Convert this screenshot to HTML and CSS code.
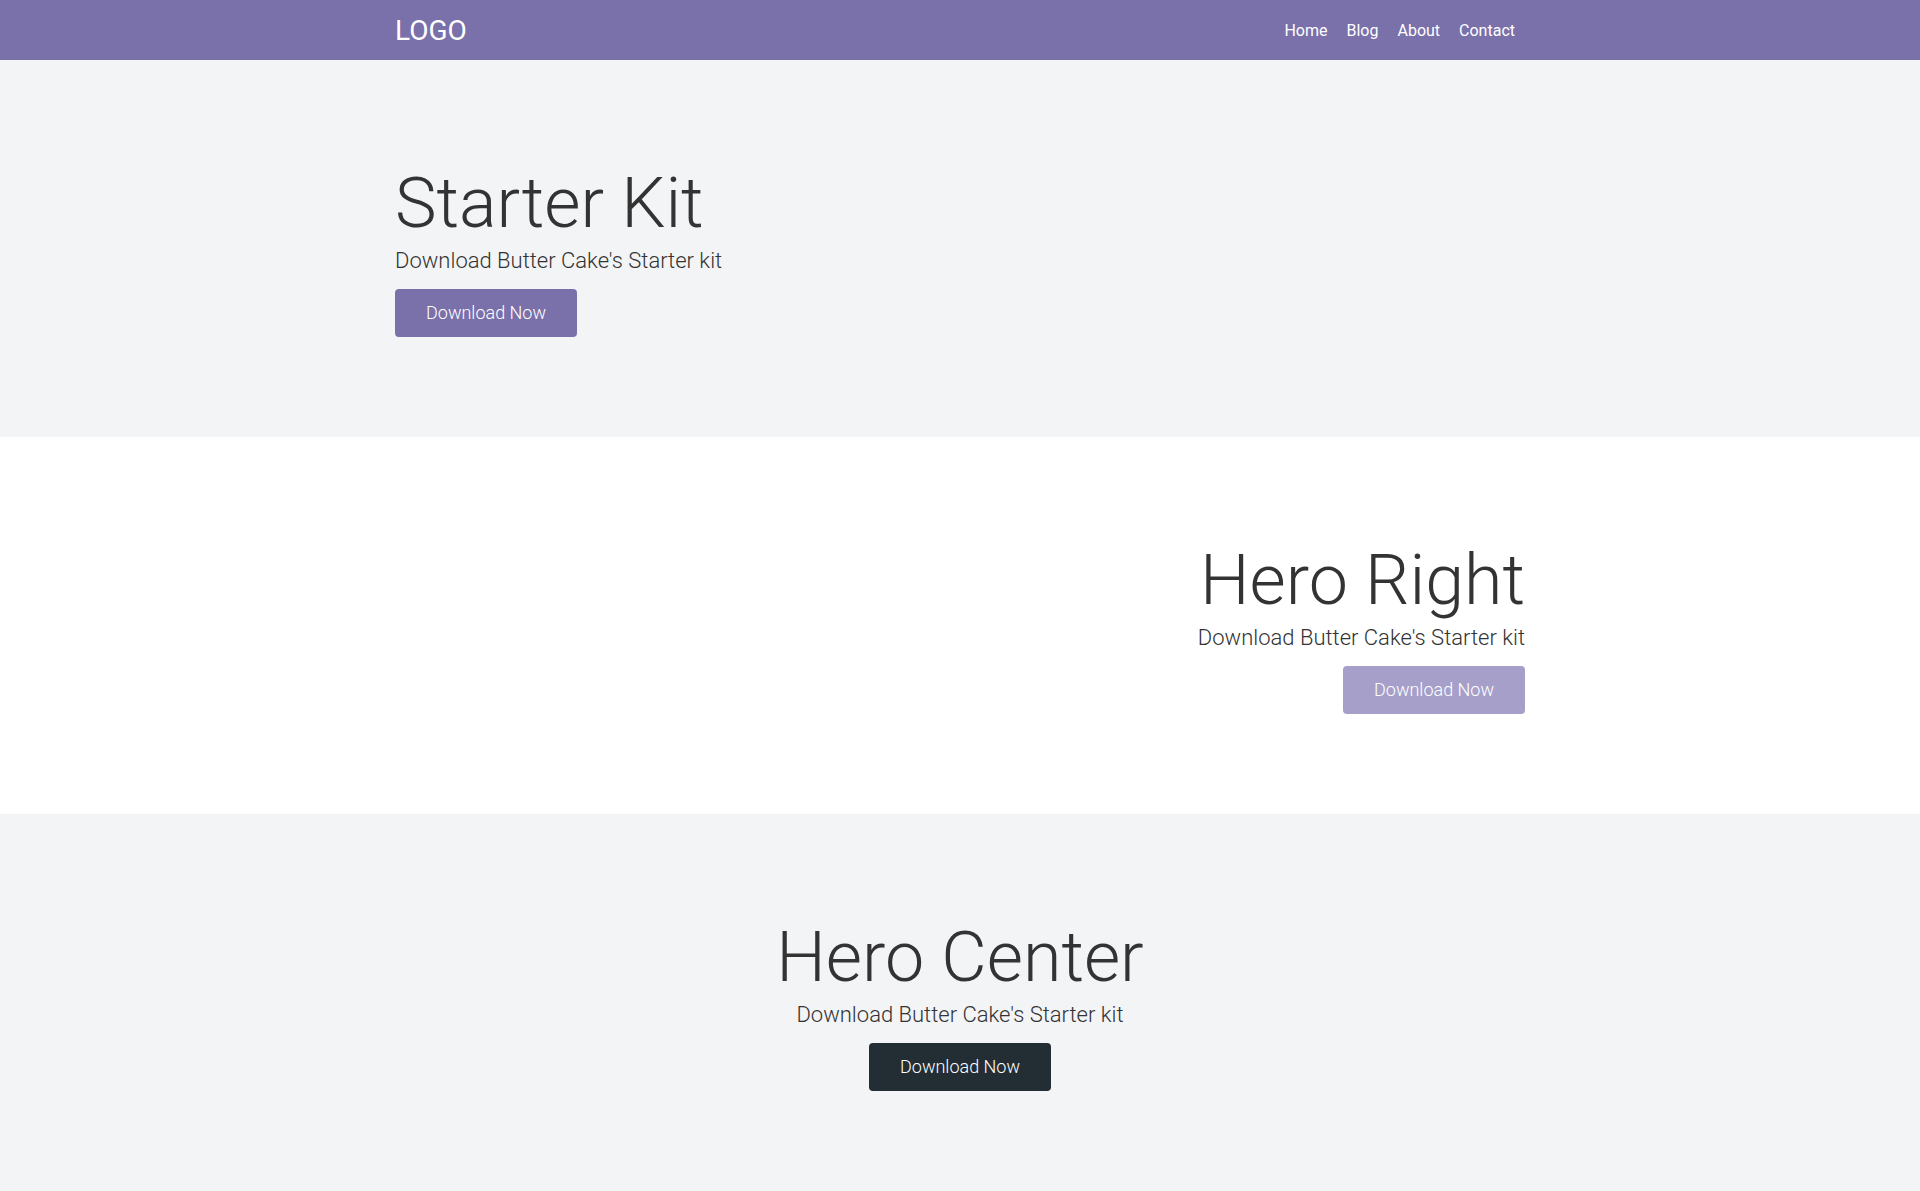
FILE: index.html
```html
<!DOCTYPE html>
<html lang="en">
<head>
    <meta charset="UTF-8">
    <meta name="viewport" content="width=device-width, initial-scale=1.0">
    <title>Butter Cake Starter Kit</title>
    <link rel="stylesheet" href="styles.css">
</head>
<body>
    <!-- Навигация -->
    <nav class="navbar">
        <div class="container navbar-inner">
            <a class="logo" href="#">LOGO</a>
            <ul class="nav-links">
                <li><a href="#">Home</a></li>
                <li><a href="#">Blog</a></li>
                <li><a href="#">About</a></li>
                <li><a href="#">Contact</a></li>
            </ul>
        </div>
    </nav>

    <!-- Hero слева -->
    <section class="hero hero-gray">
        <div class="container hero-inner">
            <h1 class="hero-title">Starter Kit</h1>
            <p class="hero-text">Download Butter Cake's Starter kit</p>
            <a class="btn btn-primary" href="#">Download Now</a>
        </div>
    </section>

    <!-- Hero справа -->
    <section class="hero hero-white">
        <div class="container hero-inner align-right">
            <h1 class="hero-title">Hero Right</h1>
            <p class="hero-text">Download Butter Cake's Starter kit</p>
            <a class="btn btn-light" href="#">Download Now</a>
        </div>
    </section>

    <!-- Hero по центру -->
    <section class="hero hero-gray">
        <div class="container hero-inner align-center">
            <h1 class="hero-title">Hero Center</h1>
            <p class="hero-text">Download Butter Cake's Starter kit</p>
            <a class="btn btn-dark" href="#">Download Now</a>
        </div>
    </section>
</body>
</html>
```

FILE: styles.css
```css
* {
    box-sizing: border-box;
}
body {
    margin: 0;
    font-family: Roboto, "Liberation Sans", sans-serif;
    color: #333;
    background-color: #fff;
}
a {
    text-decoration: none;
}
.container {
    max-width: 1130px;
    margin: 0 auto;
}
.navbar {
    background-color: #7a70aa;
    height: 60px;
}
.navbar-inner {
    display: flex;
    align-items: center;
    justify-content: space-between;
    height: 100%;
}
.logo {
    color: #fff;
    font-size: 28px;
    font-weight: 400;
}
.nav-links {
    display: flex;
    list-style: none;
    margin: 0;
    padding: 0;
}
.nav-links a {
    display: block;
    color: #fff;
    font-size: 16px;
    padding: 0 9.5px;
}
.nav-links li:last-child a {
    padding-right: 10px;
}
.hero {
    padding: 100px 0;
}
.hero-gray {
    background-color: #f3f4f6;
}
.hero-white {
    background-color: #fff;
}
.hero-inner {
    display: flex;
    flex-direction: column;
    align-items: flex-start;
}
.hero-title {
    margin: 0;
    font-size: 70px;
    font-weight: 300;
    line-height: 86px;
}
.hero-text {
    margin: 0 0 14px;
    font-size: 22px;
    font-weight: 300;
    line-height: 29px;
}
.align-right {
    align-items: flex-end;
}
.align-center {
    align-items: center;
}
.btn {
    display: block;
    width: 182px;
    height: 48px;
    line-height: 48px;
    text-align: center;
    font-size: 18px;
    font-weight: 300;
    color: #fff;
    border-radius: 4px;
}
.btn-primary {
    background-color: #7a70aa;
}
.btn-light {
    background-color: #a59fca;
}
.btn-dark {
    background-color: #232e34;
}
```
